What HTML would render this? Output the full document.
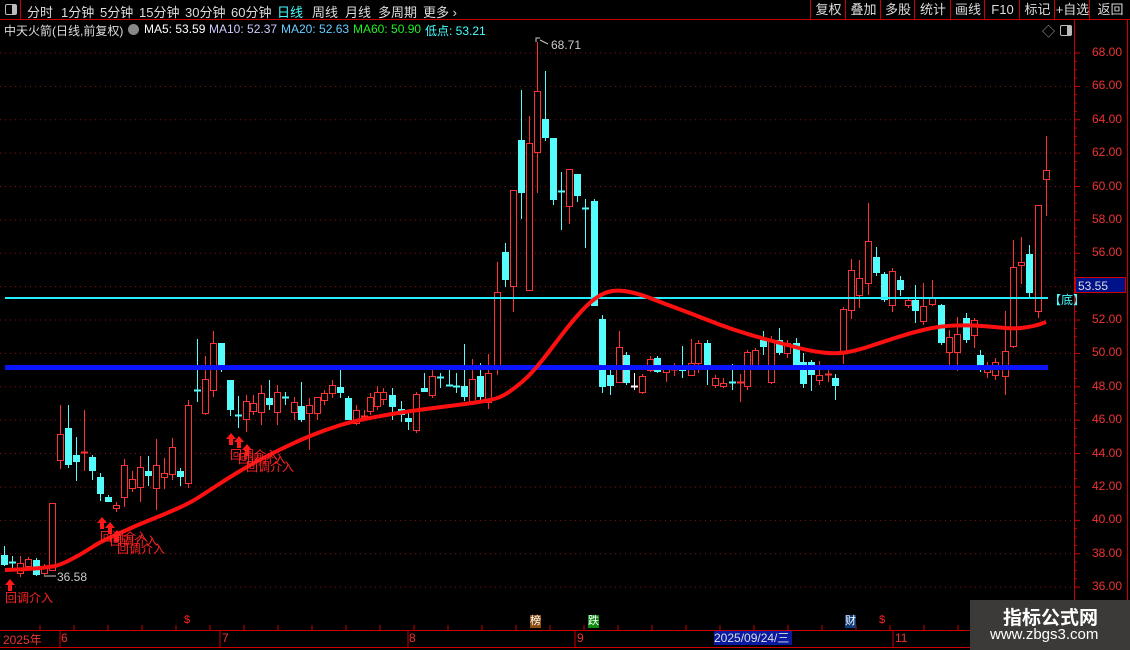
<!DOCTYPE html>
<html><head><meta charset="utf-8">
<style>
html,body{margin:0;padding:0;background:#000;width:1130px;height:650px;overflow:hidden;font-family:"Liberation Sans","Noto Sans CJK SC",sans-serif;}
.abs{position:absolute;white-space:nowrap;}
#top{position:absolute;left:0;top:0;width:1130px;height:19px;border-bottom:1px solid #c00;}
.tab{position:absolute;top:2px;font-size:13px;color:#ddd;}
.btn{position:absolute;top:0;height:19px;border-left:1px solid #c00;font-size:13px;color:#ddd;text-align:center;line-height:19px;}
.info{position:absolute;top:22px;font-size:12px;}
.pl{position:absolute;left:1092px;font-size:12px;color:#e33;}
.lbl{position:absolute;font-size:12px;color:#f22;}
</style></head><body>
<div id="top">
<div class="abs" style="left:0;top:0;width:20px;height:19px;border-right:1px solid #c00;"></div>
<div class="abs" style="left:5px;top:4px;width:10px;height:9px;border:1px solid #bbb;border-radius:2px;"><div style="position:absolute;right:0;top:0;width:4px;height:9px;background:#bbb"></div></div>
<span class="tab" style="left:27px">分时</span>
<span class="tab" style="left:61px">1分钟</span>
<span class="tab" style="left:100px">5分钟</span>
<span class="tab" style="left:139px">15分钟</span>
<span class="tab" style="left:185px">30分钟</span>
<span class="tab" style="left:231px">60分钟</span>
<span class="tab" style="left:277px;color:#4ff">日线</span>
<span class="tab" style="left:312px">周线</span>
<span class="tab" style="left:345px">月线</span>
<span class="tab" style="left:378px">多周期</span>
<span class="tab" style="left:423px">更多 ›</span>
<div class="btn" style="left:810px;width:35px">复权</div>
<div class="btn" style="left:845px;width:35px">叠加</div>
<div class="btn" style="left:880px;width:34px">多股</div>
<div class="btn" style="left:914px;width:36px">统计</div>
<div class="btn" style="left:950px;width:34px">画线</div>
<div class="btn" style="left:984px;width:35px">F10</div>
<div class="btn" style="left:1019px;width:35px">标记</div>
<div class="btn" style="left:1054px;width:35px">+自选</div>
<div class="btn" style="left:1089px;width:41px">返回</div>
</div>
<span class="info" style="left:4px;color:#ddd">中天火箭(日线,前复权)</span>
<div class="abs" style="left:128px;top:24px;width:11px;height:11px;border-radius:50%;background:#888"></div>
<span class="info" style="left:144px;color:#fff">MA5: 53.59</span>
<span class="info" style="left:209px;color:#ccf">MA10: 52.37</span>
<span class="info" style="left:281px;color:#6cf">MA20: 52.63</span>
<span class="info" style="left:353px;color:#2e2">MA60: 50.90</span>
<span class="info" style="left:425px;color:#4ff">低点: 53.21</span>
<span class="abs" style="left:1042px;top:21px;color:#aaa;font-size:13px">◇</span>
<div class="abs" style="left:1060px;top:25px;width:10px;height:9px;border:1px solid #bbb;border-radius:2px;"><div style="position:absolute;right:0;top:0;width:4px;height:9px;background:#bbb"></div></div>

<svg id="ch" class="abs" style="left:0;top:0" width="1130" height="650" xmlns="http://www.w3.org/2000/svg"></svg>

<div id="axis"></div>
<div class="abs" style="left:1075px;top:277px;width:51px;height:16px;background:#00128a;border:1px solid #c00;color:#ddd;font-size:12px;line-height:16px;padding-left:2px;box-sizing:border-box">53.55</div>
<span class="abs" style="left:1049px;top:291px;color:#4ff;font-size:12px">【底】</span>
<span class="abs" style="left:551px;top:38px;color:#ccc;font-size:12px">68.71</span>
<span class="abs" style="left:57px;top:570px;color:#ccc;font-size:12px">36.58</span>

<span class="lbl" style="left:5px;top:589px">回调介入</span>
<span class="lbl" style="left:100px;top:528px">回调介入</span>
<span class="lbl" style="left:110px;top:532px">回调介入</span>
<span class="lbl" style="left:117px;top:540px">回调介入</span>
<span class="lbl" style="left:230px;top:446px">回调介入</span>
<span class="lbl" style="left:238px;top:450px">回调介入</span>
<span class="lbl" style="left:246px;top:458px">回调介入</span>

<span class="abs" style="left:3px;top:631px;color:#e33;font-size:12px">2025年</span>
<span class="abs" style="left:61px;top:631px;color:#e33;font-size:12px">6</span>
<span class="abs" style="left:222px;top:631px;color:#e33;font-size:12px">7</span>
<span class="abs" style="left:409px;top:631px;color:#e33;font-size:12px">8</span>
<span class="abs" style="left:577px;top:631px;color:#e33;font-size:12px">9</span>
<span class="abs" style="left:714px;top:631px;width:78px;height:14px;background:#0a1aa0;color:#ddd;font-size:12px;line-height:14px">2025/09/24/三</span>
<span class="abs" style="left:895px;top:631px;color:#e33;font-size:12px">11</span>
<span class="abs" style="left:184px;top:614px;color:#f22;font-size:11px">$</span>
<span class="abs" style="left:879px;top:614px;color:#f22;font-size:11px">$</span>
<span class="abs" style="left:530px;top:615px;background:#8a4a10;color:#fff;font-size:11px;line-height:13px">榜</span>
<span class="abs" style="left:588px;top:615px;background:#108a10;color:#fff;font-size:11px;line-height:13px">跌</span>
<span class="abs" style="left:845px;top:615px;background:#103a7a;color:#fff;font-size:11px;line-height:13px">财</span>

<div class="abs" style="left:970px;top:600px;width:160px;height:50px;background:#3c3a38"></div>
<span class="abs" style="left:1003px;top:603px;color:#fff;font-size:19px;font-weight:bold">指标公式网</span>
<span class="abs" style="left:990px;top:626px;color:#fff;font-size:15px">www.zbgs3.com</span>

<script>
var s='';
for(var p=68;p>=36;p-=2){var y=53+(68-p)*16.69;s+='<line x1="0" x2="1074" y1="'+y+'" y2="'+y+'" stroke="#8a1010" stroke-width="1" stroke-dasharray="1,4"/>';}
s+='<line x1="1074.5" x2="1074.5" y1="20" y2="630" stroke="#c00"/>';
s+='<line x1="1127.5" x2="1127.5" y1="20" y2="650" stroke="#c00"/>';
s+='<line x1="0" x2="1130" y1="630.5" y2="630.5" stroke="#c00"/>';
s+='<line x1="0" x2="1130" y1="647.5" y2="647.5" stroke="#c00"/>';
for(var p=68;p>=36;p-=0.5){var y=53+(68-p)*16.69;var L=(p%2==0)?6:3;s+='<line x1="1074" x2="'+(1074+L)+'" y1="'+y+'" y2="'+y+'" stroke="#c00"/>';}
for(var x=40;x<1074;x+=34){s+='<line x1="'+x+'" x2="'+x+'" y1="625" y2="630" stroke="#c00"/>';}
[60,220,408,575,893].forEach(function(x){s+='<line x1="'+x+'" x2="'+x+'" y1="630" y2="647" stroke="#c00"/>';});
var C=[
[4,555,565,546,566,'c'],[12,562,563,556,570,'c'],[20,563,573,556,577,'r'],[28,559,566,557,568,'r'],[36,560,575,558,576,'c'],[44,566,573,564,575,'r'],
[52,503,570,503,570,'r'],[60,434,460,405,469,'r'],[68,428,465,405,468,'c'],[76,455,462,437,481,'c'],[84,452,453,410,471,'r'],[92,457,471,455,480,'c'],
[100,477,494,473,501,'c'],[108,497,502,495,502,'c'],[116,505,508,502,512,'r'],[124,465,497,459,507,'r'],[132,479,488,471,492,'r'],[140,467,487,456,502,'r'],
[148,471,476,456,486,'c'],[156,465,488,439,510,'r'],[164,473,477,458,489,'r'],[172,447,474,438,480,'r'],[180,471,477,468,486,'c'],[188,405,483,400,488,'r'],
[197,390,392,339,402,'c'],[205,379,413,356,415,'r'],[213,343,390,331,397,'r'],[221,343,370,343,372,'c'],[230,380,410,380,416,'c'],[238,415,417,396,428,'c'],
[246,401,419,395,432,'r'],[253,403,411,395,415,'r'],[261,393,412,385,425,'r'],[269,398,405,380,410,'c'],[277,392,412,385,425,'r'],[285,397,399,392,405,'c'],
[294,402,412,397,420,'r'],[301,406,420,382,422,'c'],[309,405,413,398,450,'r'],[317,397,413,397,420,'r'],[324,393,400,390,405,'r'],[332,385,393,380,398,'r'],
[340,387,393,368,398,'c'],[348,398,420,396,420,'c'],[356,410,423,405,425,'r'],[364,416,418,410,420,'r'],[370,397,411,393,415,'r'],[377,392,406,386,410,'r'],
[383,392,399,388,405,'r'],[392,395,407,388,420,'c'],[401,409,415,401,422,'c'],[408,418,422,410,430,'c'],[416,394,430,392,433,'r'],[424,388,392,373,392,'c'],
[432,376,395,370,398,'r'],[440,377,378,373,388,'c'],[449,385,387,369,386,'c'],[456,386,388,373,393,'c'],[464,386,397,344,401,'c'],[472,379,402,359,405,'r'],
[480,376,397,363,400,'c'],[488,373,402,354,409,'r'],[497,292,369,262,375,'r'],[505,252,280,243,287,'c'],[513,190,286,190,312,'r'],[521,140,193,90,219,'c'],
[529,143,290,116,290,'r'],[537,91,152,42,193,'r'],[545,119,138,71,141,'c'],[553,138,200,138,205,'c'],[561,191,193,172,230,'c'],[569,169,206,169,224,'r'],
[577,174,196,174,202,'c'],[585,208,210,199,248,'c'],[594,201,306,199,306,'c'],[602,319,387,315,393,'c'],[610,375,386,370,395,'c'],[619,347,382,331,383,'r'],
[626,355,383,352,385,'c'],[634,386,387,373,390,'w'],[642,376,392,374,394,'r'],[650,359,370,356,372,'r'],[657,358,372,356,373,'c'],[666,369,372,365,382,'r'],
[674,369,370,363,376,'r'],[682,368,371,346,378,'c'],[691,363,375,339,371,'r'],[698,343,363,340,373,'r'],[707,343,365,340,385,'c'],[715,378,385,375,388,'r'],
[723,383,386,378,388,'r'],[732,382,384,364,390,'c'],[740,382,383,374,402,'r'],[747,352,386,350,390,'r'],[755,350,366,348,370,'r'],[763,340,347,331,355,'c'],
[771,340,382,336,384,'r'],[779,340,353,328,355,'c'],[787,343,353,340,358,'r'],[796,343,365,338,366,'c'],[803,362,384,353,388,'c'],[811,362,375,360,391,'c'],
[819,375,380,361,385,'r'],[828,374,375,368,382,'r'],[835,378,386,374,400,'c'],[843,309,353,307,364,'r'],[851,270,310,259,319,'r'],[859,278,295,260,308,'r'],
[868,241,283,203,295,'r'],[876,257,273,247,276,'c'],[884,274,300,272,302,'c'],[892,271,305,268,312,'r'],[900,280,290,276,296,'c'],[908,300,305,298,308,'r'],
[915,300,311,285,323,'c'],[923,306,321,283,325,'r'],[932,297,304,280,306,'r'],[941,305,343,304,345,'c'],[949,337,352,330,370,'r'],[957,334,352,317,371,'r'],
[966,318,340,313,343,'c'],[974,320,335,318,348,'r'],[980,355,370,350,372,'c'],[987,367,372,362,378,'r'],[995,362,375,358,380,'r'],[1005,351,376,311,395,'r'],
[1013,267,346,240,348,'r'],[1021,262,265,237,284,'r'],[1029,254,293,245,297,'c'],[1038,205,311,205,318,'r'],[1046,170,179,136,216,'r']];
C.forEach(function(c){var x=c[0],col=c[5]=='r'?'#ff3232':(c[5]=='c'?'#54fcfc':'#fff');
s+='<line x1="'+x+'.5" x2="'+x+'.5" y1="'+c[3]+'" y2="'+c[4]+'" stroke="'+col+'"/>';
var h=c[2]-c[1];
if(h<=2){s+='<line x1="'+(x-3)+'" x2="'+(x+4)+'" y1="'+c[1]+'.5" y2="'+c[1]+'.5" stroke="'+col+'" stroke-width="2"/>';}
else if(c[5]=='r'){s+='<rect x="'+(x-3)+'.5" y="'+c[1]+'.5" width="6" height="'+h+'" fill="#000" stroke="'+col+'"/>';}
else{s+='<rect x="'+(x-3)+'" y="'+c[1]+'" width="7" height="'+h+'" fill="'+col+'"/>';}
});
s+='<rect x="5" y="365" width="1043" height="5" fill="#0a14ff"/>';
s+='<rect x="5" y="297" width="1043" height="2" fill="#2ef"/>';
var P=[[5,570],[30,569],[50,567],[60,565],[80,555],[100,542],[120,533],[140,524],[165,514],[190,503],[210,490],[230,477],[250,465],[275,452],[300,440],[325,430],[350,422],[380,416],[410,411],[450,406],[480,402],[500,398],[515,388],[530,375],[545,357],[560,337],[575,318],[590,302],[605,292],[620,290],[640,294],[660,302],[690,313],[720,325],[750,335],[780,343],[810,351],[835,354],[855,351],[880,343],[910,333],[940,326],[970,325],[995,327],[1015,329],[1035,326],[1046,322]];
var d='M'+P[0][0]+' '+P[0][1];
for(var i=1;i<P.length;i++){var a=P[i-1],b=P[i];d+=' Q'+a[0]+' '+a[1]+' '+((a[0]+b[0])/2)+' '+((a[1]+b[1])/2);}
d+=' L1046 322';
s+='<path d="'+d+'" fill="none" stroke="#ff1010" stroke-width="4"/>';
function arr(x,y){s+='<path d="M'+x+' '+y+' l-5 6 h3 v6 h4 v-6 h3 z" fill="#ff1a1a"/>';}
arr(10,579);arr(102,517);arr(110,522);arr(117,530);arr(231,433);arr(239,436);arr(247,444);
s+='<path d="M536 42 l0 -4 l4 0 M540 40 l8 4" stroke="#ccc" fill="none"/>';
s+='<line x1="44" x2="56" y1="576" y2="576" stroke="#ccc"/>';
document.getElementById('ch').innerHTML=s;
var ax='';
for(var p=68;p>=36;p-=2){var y=53+(68-p)*16.69;ax+='<span class="pl" style="top:'+(y-8)+'px">'+p.toFixed(2)+'</span>';}
document.getElementById('axis').innerHTML=ax;
</script>
</body></html>
